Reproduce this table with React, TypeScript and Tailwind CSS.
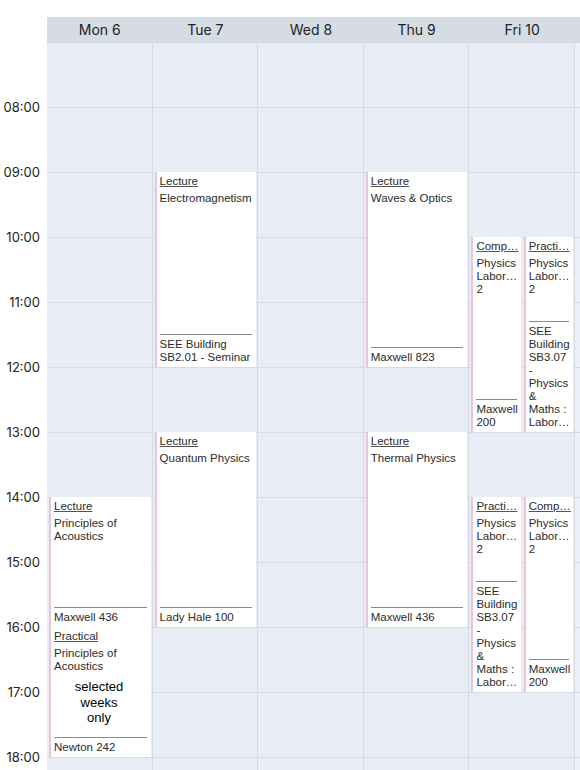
import React from "react";

type Lines = string | string[];

interface CalEvent {
    day: number;
    start: number;
    end: number;
    kind: string;
    title: Lines;
    location: Lines;
    note?: string;
    lane?: number;
    lanes?: number;
}

const HOUR = 65;
const FIRST_HOUR = 7;
const COL_W = 105.6;

const days = ["Mon 6", "Tue 7", "Wed 8", "Thu 9", "Fri 10"];
const rows = Array.from({ length: 12 }, (_, i) => FIRST_HOUR + i);
const labels = rows.filter((h) => h >= 8 && h <= 18);

const events: CalEvent[] = [
    { day: 0, start: 14, end: 16, kind: "Lecture", title: "Principles of Acoustics", location: "Maxwell 436" },
    { day: 0, start: 16, end: 18, kind: "Practical", title: "Principles of Acoustics", location: "Newton 242", note: "selected weeks only" },
    { day: 1, start: 9, end: 12, kind: "Lecture", title: "Electromagnetism", location: ["SEE Building", "SB2.01 - Seminar"] },
    { day: 1, start: 13, end: 16, kind: "Lecture", title: "Quantum Physics", location: "Lady Hale 100" },
    { day: 3, start: 9, end: 12, kind: "Lecture", title: "Waves & Optics", location: "Maxwell 823" },
    { day: 3, start: 13, end: 16, kind: "Lecture", title: "Thermal Physics", location: "Maxwell 436" },
    { day: 4, start: 10, end: 13, kind: "Comp…", title: ["Physics", "Labor…", "2"], location: ["Maxwell", "200"], lane: 0, lanes: 2 },
    {
        day: 4, start: 10, end: 13, kind: "Practi…", title: ["Physics", "Labor…", "2"],
        location: ["SEE", "Building", "SB3.07", "-", "Physics", "&", "Maths :", "Labor…"], lane: 1, lanes: 2,
    },
    {
        day: 4, start: 14, end: 17, kind: "Practi…", title: ["Physics", "Labor…", "2"],
        location: ["SEE", "Building", "SB3.07", "-", "Physics", "&", "Maths :", "Labor…"], lane: 0, lanes: 2,
    },
    { day: 4, start: 14, end: 17, kind: "Comp…", title: ["Physics", "Labor…", "2"], location: ["Maxwell", "200"], lane: 1, lanes: 2 },
];

function TextLines({ value }: { value: Lines }) {
    if (typeof value === "string") return <>{value}</>;
    return (
        <>
            {value.map((line, i) => (
                <span key={i} className="block whitespace-nowrap">
                    {line}
                </span>
            ))}
        </>
    );
}

function EventCard({ ev }: { ev: CalEvent }) {
    const lanes = ev.lanes ?? 1;
    const lane = ev.lane ?? 0;
    const gap = 3;
    const inner = COL_W - 4 - gap * (lanes - 1);
    const w = inner / lanes;

    return (
        <div
            className="absolute flex flex-col overflow-hidden bg-white border-l-2 border-[#efc3d6] pl-[3px] pr-1 pt-[3px] text-[11.5px] leading-[13px] text-[#2b2b2b]"
            style={{
                top: (ev.start - FIRST_HOUR) * HOUR,
                height: (ev.end - ev.start) * HOUR,
                left: 2 + lane * (w + gap),
                width: w,
            }}
        >
            <div className="underline underline-offset-[1px] decoration-[#555] whitespace-nowrap">{ev.kind}</div>
            <div className="mt-1">
                <TextLines value={ev.title} />
            </div>
            <div className="flex-1">
                {ev.note && (
                    <div className="mt-[6px] ml-[15px] w-[60px] text-center text-[13px] leading-[15.5px] text-black">
                        {ev.note}
                    </div>
                )}
            </div>
            <div className="border-t border-[#8a8a8a] pt-[3px] pb-[3px]">
                <TextLines value={ev.location} />
            </div>
        </div>
    );
}

export default function App() {
    return (
        <div className="w-[580px] h-[770px] overflow-hidden bg-white pt-[17px] font-['Liberation_Sans',Arial,sans-serif]">
            {/* Day header */}
            <div className="flex h-[25px]">
                <div className="w-[47px] shrink-0" />
                <div className="flex flex-1 bg-[#d6dce4] font-['Inter',sans-serif] text-[14px] text-[#222]">
                    {days.map((d) => (
                        <div key={d} className="w-[105.6px] shrink-0 flex items-center justify-center">
                            {d}
                        </div>
                    ))}
                </div>
            </div>

            {/* Body */}
            <div className="flex">
                <div className="relative w-[47px] shrink-0 font-['Inter',sans-serif] text-[13px] text-[#222]">
                    {labels.map((h) => (
                        <div
                            key={h}
                            className="absolute right-[7px] leading-[16px]"
                            style={{ top: (h - FIRST_HOUR) * HOUR - 8 }}
                        >
                            {String(h).padStart(2, "0")}:00
                        </div>
                    ))}
                </div>

                <div className="flex flex-1 bg-[#e8edf5]">
                    {days.map((d, di) => (
                        <div key={d} className="relative w-[105.6px] shrink-0 border-r border-[#d5dbe4]">
                            {rows.map((h) => (
                                <div key={h} className="h-[65px] border-t border-[#d5dbe4]" />
                            ))}
                            {events
                                .filter((e) => e.day === di)
                                .map((e, i) => (
                                    <EventCard key={i} ev={e} />
                                ))}
                        </div>
                    ))}
                    <div className="flex-1 bg-[#edf1f7]">
                        {rows.map((h) => (
                            <div key={h} className="h-[65px] border-t border-[#d5dbe4]" />
                        ))}
                    </div>
                </div>
            </div>
        </div>
    );
}
